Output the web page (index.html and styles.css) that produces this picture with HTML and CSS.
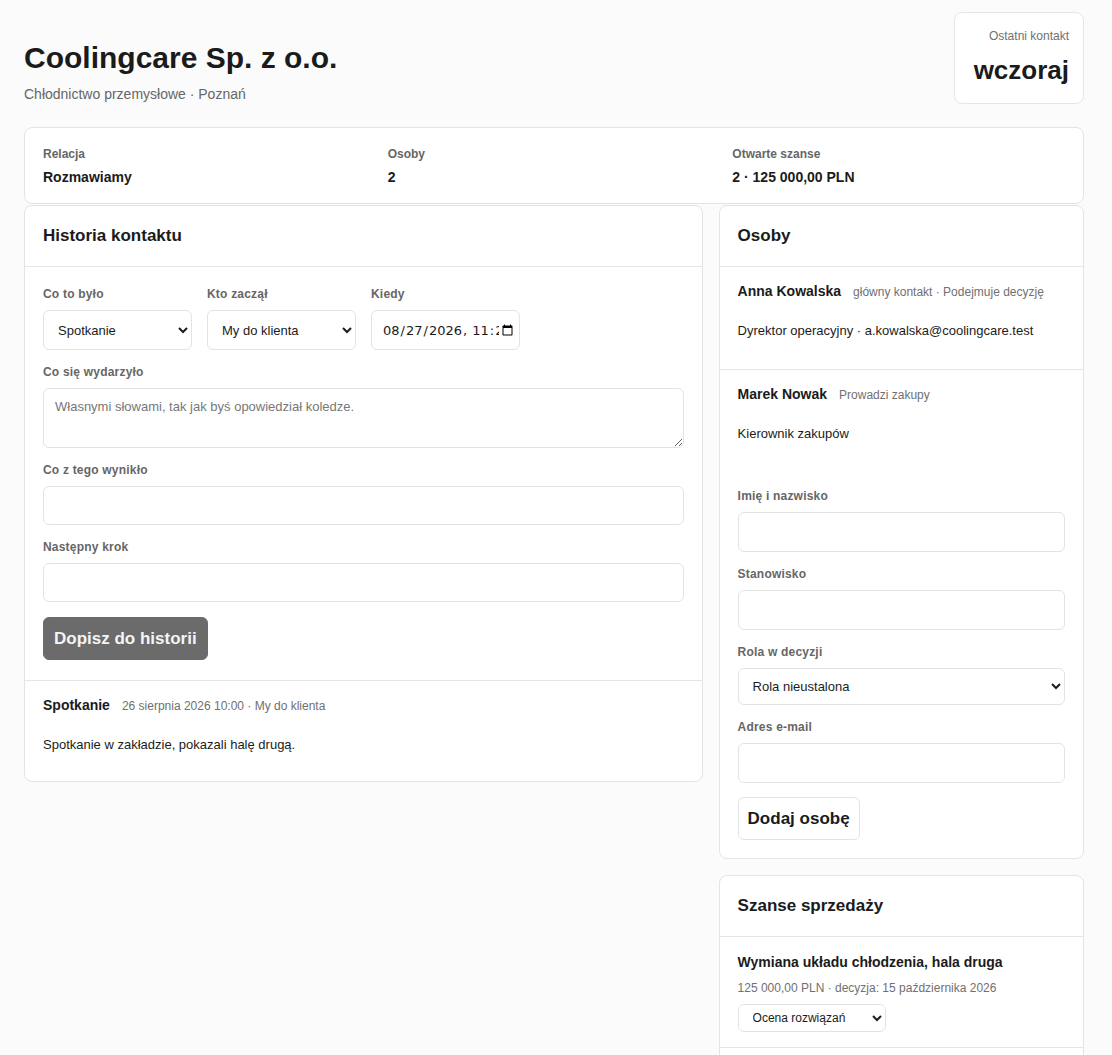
FILE: index.html
```html
<!DOCTYPE html>
<html lang="pl">
<head>
<meta charset="utf-8">
<title>Coolingcare Sp. z o.o.</title>
<link rel="stylesheet" href="styles.css">
</head>
<body>
<main class="page">
  <header class="page-head">
    <div class="company">
      <h1 class="company-name">Coolingcare Sp. z o.o.</h1>
      <p class="company-sub">Chłodnictwo przemysłowe · Poznań</p>
    </div>
    <div class="last-contact">
      <div class="last-label">Ostatni kontakt</div>
      <div class="last-value">wczoraj</div>
    </div>
  </header>

  <section class="stats">
    <div class="stat">
      <div class="stat-label">Relacja</div>
      <div class="stat-value">Rozmawiamy</div>
    </div>
    <div class="stat">
      <div class="stat-label">Osoby</div>
      <div class="stat-value">2</div>
    </div>
    <div class="stat">
      <div class="stat-label">Otwarte szanse</div>
      <div class="stat-value">2 · 125 000,00 PLN</div>
    </div>
  </section>

  <div class="columns">
    <section class="card">
      <h2 class="card-title">Historia kontaktu</h2>
      <form class="card-section form history-form">
        <div class="field-row">
          <label class="field">
            <span class="field-label">Co to było</span>
            <select class="control select">
              <option>Spotkanie</option>
              <option>Telefon</option>
              <option>E-mail</option>
            </select>
          </label>
          <label class="field">
            <span class="field-label">Kto zaczął</span>
            <select class="control select">
              <option>My do klienta</option>
              <option>Klient do nas</option>
            </select>
          </label>
          <label class="field">
            <span class="field-label">Kiedy</span>
            <input class="control date" type="datetime-local" value="2026-08-27T11:22">
          </label>
        </div>
        <label class="field">
          <span class="field-label">Co się wydarzyło</span>
          <textarea class="control textarea" placeholder="Własnymi słowami, tak jak byś opowiedział koledze."></textarea>
        </label>
        <label class="field">
          <span class="field-label">Co z tego wynikło</span>
          <input class="control" type="text">
        </label>
        <label class="field">
          <span class="field-label">Następny krok</span>
          <input class="control" type="text">
        </label>
        <div>
          <button type="button" class="btn btn-dark">Dopisz do historii</button>
        </div>
      </form>
      <article class="card-section entry">
        <div class="entry-head">
          <span class="entry-title">Spotkanie</span>
          <span class="meta">26 sierpnia 2026 10:00 · My do klienta</span>
        </div>
        <p class="entry-body">Spotkanie w zakładzie, pokazali halę drugą.</p>
      </article>
    </section>

    <div class="side">
      <section class="card">
        <h2 class="card-title">Osoby</h2>
        <div class="card-section person">
          <div class="person-head">
            <span class="person-name">Anna Kowalska</span>
            <span class="meta">główny kontakt · Podejmuje decyzję</span>
          </div>
          <p class="person-detail">Dyrektor operacyjny · a.kowalska@coolingcare.test</p>
        </div>
        <div class="card-section person">
          <div class="person-head">
            <span class="person-name">Marek Nowak</span>
            <span class="meta">Prowadzi zakupy</span>
          </div>
          <p class="person-detail">Kierownik zakupów</p>
        </div>
        <form class="form person-form">
          <label class="field">
            <span class="field-label">Imię i nazwisko</span>
            <input class="control" type="text">
          </label>
          <label class="field">
            <span class="field-label">Stanowisko</span>
            <input class="control" type="text">
          </label>
          <label class="field">
            <span class="field-label">Rola w decyzji</span>
            <select class="control select select-wide">
              <option>Rola nieustalona</option>
              <option>Podejmuje decyzję</option>
              <option>Prowadzi zakupy</option>
            </select>
          </label>
          <label class="field">
            <span class="field-label">Adres e-mail</span>
            <input class="control" type="email">
          </label>
          <div class="form-actions">
            <button type="button" class="btn btn-light">Dodaj osobę</button>
          </div>
        </form>
      </section>

      <section class="card">
        <h2 class="card-title">Szanse sprzedaży</h2>
        <div class="card-section deal">
          <div class="deal-title">Wymiana układu chłodzenia, hala druga</div>
          <div class="meta deal-meta">125 000,00 PLN · decyzja: 15 października 2026</div>
          <select class="control select select-small">
            <option>Ocena rozwiązań</option>
            <option>Negocjacje</option>
            <option>Wygrana</option>
          </select>
        </div>
        <div class="card-section deal">
          <div class="deal-title">Przegląd agregatów, hala pierwsza</div>
          <div class="meta deal-meta">0,00 PLN · decyzja: nieustalona</div>
          <select class="control select select-small">
            <option>Rozpoznanie</option>
            <option>Ocena rozwiązań</option>
          </select>
        </div>
      </section>
    </div>
  </div>
</main>
</body>
</html>
```

FILE: styles.css
```css
* {
  box-sizing: border-box;
}

html,
body {
  margin: 0;
  background: #fbfbfb;
  color: #1b1b1b;
  font-family: "Liberation Sans", Arial, sans-serif;
}

.page {
  width: 1060px;
  margin-left: 24px;
  padding: 12px 0 40px;
}

/* Header */
.page-head {
  display: flex;
  justify-content: space-between;
  align-items: flex-start;
}

.company {
  padding-top: 28px;
}

.company-name {
  margin: 0;
  font-size: 30px;
  line-height: 36px;
  font-weight: 700;
  color: #1b1b1b;
}

.company-sub {
  margin: 10px 0 0;
  font-size: 14px;
  line-height: 16px;
  color: #666;
}

.last-contact {
  background: #fff;
  border: 1px solid #e6e6e6;
  border-radius: 8px;
  padding: 16px 14px 18px 19px;
  text-align: right;
}

.last-label {
  font-size: 12px;
  line-height: 14px;
  color: #707070;
}

.last-value {
  margin-top: 12px;
  font-size: 26px;
  line-height: 30px;
  font-weight: 700;
  color: #1b1b1b;
}

/* Summary strip */
.stats {
  margin-top: 23px;
  background: #fff;
  border: 1px solid #e4e4e4;
  border-radius: 8px;
  padding: 19px 18px 17px;
  display: grid;
  grid-template-columns: repeat(3, 1fr);
  column-gap: 12px;
}

.stat-label {
  font-size: 12px;
  line-height: 14px;
  font-weight: 700;
  color: #666;
}

.stat-value {
  margin-top: 8px;
  font-size: 14px;
  line-height: 17px;
  font-weight: 700;
  color: #1b1b1b;
}

/* Two-column body */
.columns {
  margin-top: 1px;
  display: grid;
  grid-template-columns: 13fr 7fr;
  column-gap: 16px;
  align-items: start;
}

.side {
  display: flex;
  flex-direction: column;
  gap: 16px;
}

.card {
  background: #fff;
  border: 1px solid #e4e4e4;
  border-radius: 8px;
  overflow: hidden;
}

.card-title {
  margin: 0;
  padding: 20px 18px 20px;
  font-size: 17px;
  line-height: 20px;
  font-weight: 700;
  color: #1b1b1b;
  border-bottom: 1px solid #e6e6e6;
}

.card-section + .card-section {
  border-top: 1px solid #e6e6e6;
}

/* Forms */
.form {
  display: flex;
  flex-direction: column;
  gap: 15px;
  padding: 18px 18px 20px;
}

.history-form {
  padding-top: 20px;
}

.field {
  display: flex;
  flex-direction: column;
  gap: 8px;
}

.field-label {
  font-size: 12px;
  line-height: 15px;
  font-weight: 700;
  letter-spacing: 0.2px;
  color: #666;
}

.field-row {
  display: flex;
  gap: 15px;
}

.field-row .field {
  width: 149px;
}

.control {
  width: 100%;
  height: 39px;
  background: #fff;
  border: 1px solid #e3e3e3;
  border-radius: 6px;
  padding: 0 11px;
  font-family: "Liberation Sans", Arial, sans-serif;
  font-size: 13px;
  color: #1b1b1b;
}

.field-row .control {
  height: 40px;
}

.person-form .control {
  height: 40px;
}

.select {
  padding: 0 8px 0 10px;
}

.person-form .select-wide {
  height: 37px;
}

.date {
  font-family: "DejaVu Sans", sans-serif;
  font-size: 13px;
  padding: 0 3px 0 10px;
}

.textarea {
  height: 60px;
  padding: 10px 11px;
  resize: vertical;
  line-height: 16px;
}

.textarea::placeholder {
  color: #777;
}

.btn {
  font-family: "Liberation Sans", Arial, sans-serif;
  font-size: 17px;
  line-height: 21px;
  font-weight: 700;
  border-radius: 6px;
  padding: 10px 10px;
  cursor: pointer;
}

.btn-dark {
  background: #6b6b6b;
  border: 1px solid #6b6b6b;
  color: #f4f4f4;
}

.btn-light {
  background: #fff;
  border: 1px solid #e3e3e3;
  color: #1b1b1b;
  padding: 10px 9px;
}

/* History entries */
.entry {
  padding: 16px 18px 28px;
}

.entry-head,
.person-head {
  display: flex;
  align-items: baseline;
  gap: 12px;
}

.entry-title,
.person-name {
  font-size: 14px;
  line-height: 17px;
  font-weight: 700;
  color: #1b1b1b;
}

.meta {
  font-size: 12px;
  line-height: 14px;
  color: #707070;
}

.entry-body {
  margin: 23px 0 0;
  font-size: 13px;
  line-height: 16px;
  color: #1b1b1b;
}

/* People */
.person {
  padding: 16px 18px 30px;
}

.person-detail {
  margin: 23px 0 0;
  font-size: 13px;
  line-height: 16px;
  color: #1b1b1b;
}

.person-form {
  padding-top: 17px;
  padding-bottom: 18px;
}

.form-actions {
  margin-top: -1px;
}

/* Deals */
.deal {
  padding: 17px 18px 15px;
}

.deal-title {
  font-size: 14px;
  line-height: 17px;
  font-weight: 700;
  color: #1b1b1b;
}

.deal-meta {
  margin-top: 10px;
}

.select-small {
  margin-top: 9px;
  width: 148px;
  height: 28px;
  font-size: 12px;
  padding: 0 6px 0 10px;
}
```
